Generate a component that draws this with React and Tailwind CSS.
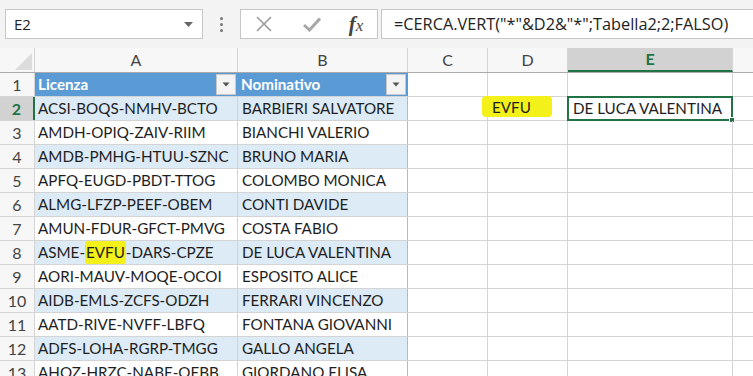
import React from 'react';

const rows = [
    ['ACSI-BOQS-NMHV-BCTO', 'BARBIERI SALVATORE'],
    ['AMDH-OPIQ-ZAIV-RIIM', 'BIANCHI VALERIO'],
    ['AMDB-PMHG-HTUU-SZNC', 'BRUNO MARIA'],
    ['APFQ-EUGD-PBDT-TTOG', 'COLOMBO MONICA'],
    ['ALMG-LFZP-PEEF-OBEM', 'CONTI DAVIDE'],
    ['AMUN-FDUR-GFCT-PMVG', 'COSTA FABIO'],
    ['ASME-EVFU-DARS-CPZE', 'DE LUCA VALENTINA'],
    ['AORI-MAUV-MOQE-OCOI', 'ESPOSITO ALICE'],
    ['AIDB-EMLS-ZCFS-ODZH', 'FERRARI VINCENZO'],
    ['AATD-RIVE-NVFF-LBFQ', 'FONTANA GIOVANNI'],
    ['ADFS-LOHA-RGRP-TMGG', 'GALLO ANGELA'],
    ['AHOZ-HRZC-NABE-OEBB', 'GIORDANO ELISA'],
];

const font = { fontFamily: 'Lato, "Liberation Sans", sans-serif' };

const FilterButton = () => (
    <div className="absolute right-[1px] top-[1px] w-[20px] h-[21px] bg-[#f4f4f4] border border-[#c8c8c8] flex items-center justify-center">
        <svg width="8" height="5" viewBox="0 0 8 5"><path d="M0.5 0.5 L7.5 0.5 L4 4.5 Z" fill="#555" /></svg>
    </div>
);

const Highlight = ({ children }) => (
    <span className="bg-[#f4f01a] rounded-[3px] px-[1px]">{children}</span>
);

const Cell = ({ w, className = '', children }) => (
    <div className={`relative h-full flex items-center shrink-0 whitespace-nowrap border-r ${w} ${className}`}>{children}</div>
);

const App = () => {
    return (
        <div className="w-[753px] h-[376px] overflow-hidden bg-white text-[15.2px] text-[#1e1e1e]" style={font}>
            {/* formula bar */}
            <div className="h-[48px] bg-[#f3f3f3] flex items-start pt-[9px] pl-[5px]">
                <div className="w-[198px] h-[30px] bg-white border border-[#c6c6c6] flex items-center pl-[8px] pr-[9px] justify-between">
                    <span className="text-[#222]" style={{ fontFamily: '"Open Sans", sans-serif', fontSize: '15px' }}>E2</span>
                    <svg width="9" height="5" viewBox="0 0 9 5"><path d="M0 0 L9 0 L4.5 5 Z" fill="#666" /></svg>
                </div>
                <div className="w-[37px] h-[30px] flex flex-col items-center justify-center gap-[3px]">
                    <div className="w-[3px] h-[3px] bg-[#777] rounded-full" />
                    <div className="w-[3px] h-[3px] bg-[#777] rounded-full" />
                    <div className="w-[3px] h-[3px] bg-[#777] rounded-full" />
                </div>
                <div className="w-[138px] h-[30px] bg-white border border-[#c6c6c6] flex items-center">
                    <div className="w-[46px] flex justify-center">
                        <svg width="16" height="16" viewBox="0 0 16 16"><path d="M1 1 L15 15 M15 1 L1 15" stroke="#9a9a9a" strokeWidth="1.6" /></svg>
                    </div>
                    <div className="w-[50px] flex justify-center">
                        <svg width="18" height="15" viewBox="0 0 18 15"><path d="M1 8 L6.5 13 L17 1.5" stroke="#a8a8a8" strokeWidth="3" fill="none" /></svg>
                    </div>
                    <div className="flex-1 flex justify-center pr-[2px]">
                        <span className="italic font-bold text-[#444] text-[21px] leading-none" style={{ fontFamily: '"Liberation Serif", serif' }}>
                            f<span className="text-[17px] font-normal">x</span>
                        </span>
                    </div>
                </div>
                <div className="ml-[3px] flex-1 h-[30px] bg-white border border-[#c6c6c6] border-r-0 flex items-center pl-[12px]">
                    <span className="text-[#222] whitespace-nowrap" style={{ fontFamily: '"Open Sans", sans-serif', fontSize: '16.3px' }}>=CERCA.VERT("*"&amp;D2&amp;"*";Tabella2;2;FALSO)</span>
                </div>
            </div>

            {/* column headers */}
            <div className="h-[25px] flex bg-[#f7f7f7] border-b border-[#ababab] text-[#444] text-[16px]">
                <div className="w-[35px] shrink-0 h-full border-r border-[#d4d4d4] flex items-end justify-end pr-[2px] pb-[2px]">
                    <svg width="17" height="17" viewBox="0 0 17 17"><path d="M17 0 L17 17 L0 17 Z" fill="#dcdcdc" /></svg>
                </div>
                <Cell w="w-[203px]" className="border-[#d4d4d4] justify-center">A</Cell>
                <Cell w="w-[170px]" className="border-[#d4d4d4] justify-center">B</Cell>
                <Cell w="w-[80px]" className="border-[#d4d4d4] justify-center">C</Cell>
                <Cell w="w-[80px]" className="border-[#d4d4d4] justify-center">D</Cell>
                <Cell w="w-[165px]" className="border-[#d4d4d4] justify-center bg-[#d2d2d2] border-b-2 border-b-[#217346] font-bold text-[#217346]">E</Cell>
                <div className="flex-1" />
            </div>

            {/* row 1 : table header */}
            <div className="h-[24px] flex border-b border-[#d4d4d4]">
                <div className="w-[35px] shrink-0 h-full bg-[#f7f7f7] border-r border-[#d4d4d4] flex items-center justify-center text-[#444] text-[16px]">1</div>
                <Cell w="w-[203px]" className="bg-[#5b9bd5] border-[#5b9bd5] text-white font-bold pl-[3px]">Licenza<FilterButton /></Cell>
                <Cell w="w-[170px]" className="bg-[#5b9bd5] border-[#5b9bd5] text-white font-bold pl-[3px]">Nominativo<FilterButton /></Cell>
                <Cell w="w-[80px]" className="border-[#d4d4d4]" />
                <Cell w="w-[80px]" className="border-[#d4d4d4]" />
                <Cell w="w-[165px]" className="border-[#d4d4d4]" />
                <div className="flex-1" />
            </div>

            {rows.map(([lic, nome], i) => {
                const n = i + 2;
                const band = i % 2 === 0;
                const sel = n === 2;
                const tableBg = band ? 'bg-[#ddebf7]' : 'bg-white';
                const parts = lic.split('EVFU');
                return (
                    <div key={n} className="h-[24px] flex border-b border-[#d4d4d4]">
                        <div className={`w-[35px] shrink-0 h-full flex items-center justify-center text-[16px] ${sel ? 'bg-[#d2d2d2] text-[#217346] font-bold border-r-2 border-[#217346]' : 'bg-[#f7f7f7] text-[#444] border-r border-[#d4d4d4]'}`}>{n}</div>
                        <Cell w="w-[203px]" className={`${tableBg} border-[#c5d9ee] pl-[3px]`}>
                            {parts.length > 1 ? (<>{parts[0]}<Highlight>EVFU</Highlight>{parts[1]}</>) : lic}
                        </Cell>
                        <Cell w="w-[170px]" className={`${tableBg} border-[#9bc2e6] pl-[4px]`}>{nome}</Cell>
                        <Cell w="w-[80px]" className="border-[#d4d4d4]" />
                        <Cell w="w-[80px]" className="border-[#d4d4d4]">
                            {sel && (
                                <div className="absolute left-[-6px] top-[-1px] w-[70px] h-[21px] bg-[#f4f01a] rounded-[4px] flex items-center pl-[10px] pt-[2px]">EVFU</div>
                            )}
                        </Cell>
                        <Cell w="w-[165px]" className="border-[#d4d4d4]">
                            {sel && (
                                <div className="absolute left-[-1px] top-[-1px] w-[166px] h-[25px] border-2 border-[#217346] flex items-center pl-[4px]">
                                    DE LUCA VALENTINA
                                    <div className="absolute right-[-4px] bottom-[-4px] w-[6px] h-[6px] bg-[#217346] border border-white" />
                                </div>
                            )}
                        </Cell>
                        <div className="flex-1" />
                    </div>
                );
            })}
        </div>
    );
};

export default App;
